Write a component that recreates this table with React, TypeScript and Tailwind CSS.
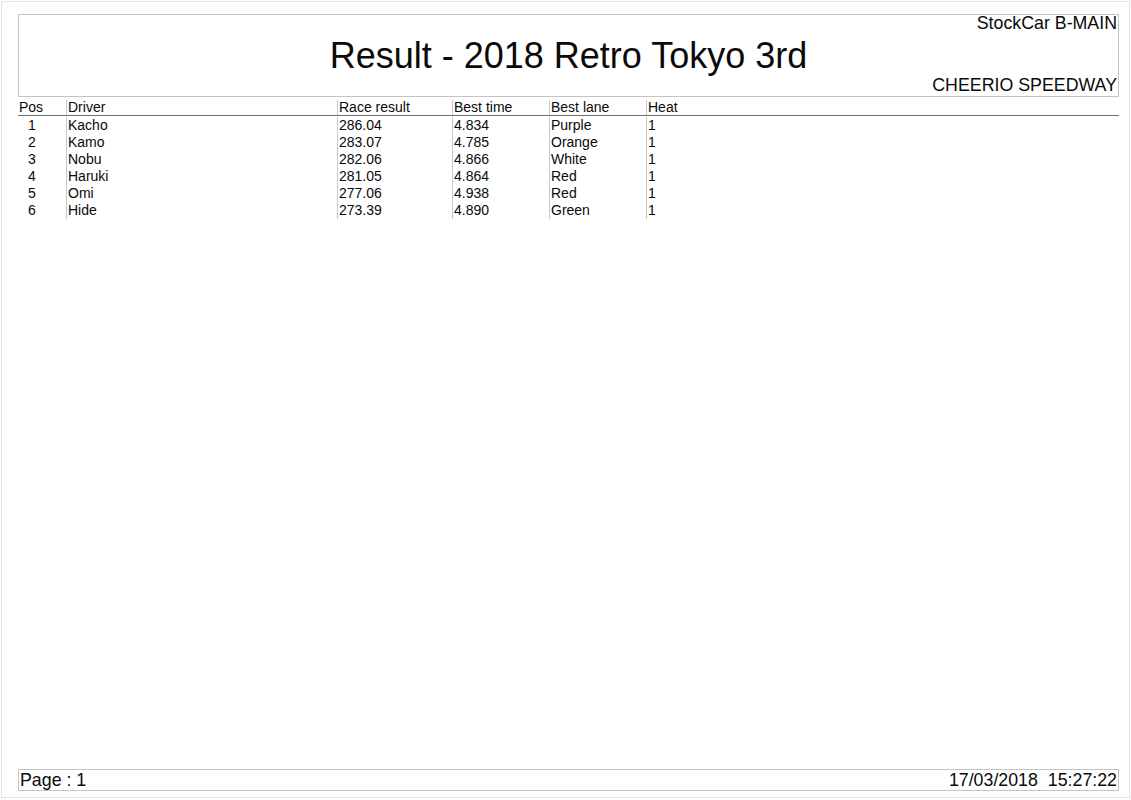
import React from "react";

const rows = [
  { pos: "1", driver: "Kacho", result: "286.04", best: "4.834", lane: "Purple", heat: "1" },
  { pos: "2", driver: "Kamo", result: "283.07", best: "4.785", lane: "Orange", heat: "1" },
  { pos: "3", driver: "Nobu", result: "282.06", best: "4.866", lane: "White", heat: "1" },
  { pos: "4", driver: "Haruki", result: "281.05", best: "4.864", lane: "Red", heat: "1" },
  { pos: "5", driver: "Omi", result: "277.06", best: "4.938", lane: "Red", heat: "1" },
  { pos: "6", driver: "Hide", result: "273.39", best: "4.890", lane: "Green", heat: "1" },
];

const cols = "grid grid-cols-[48px_271px_115px_97px_97px_1fr]";

export default function App() {
  return (
    <div
      className="w-[1131px] h-[800px] bg-white p-px text-[#0a0a0a]"
      style={{ fontFamily: '"Liberation Sans", Arial, sans-serif' }}
    >
      <div className="h-[797px] border border-[#e4e4e4] flex flex-col pl-[16px] pr-[10px] pt-[12px] pb-[6px]">
        {/* Header box */}
        <div className="h-[83px] border border-[#c4c4c4] flex flex-col">
          <div className="text-right text-[17.8px] leading-none pr-px">StockCar B-MAIN</div>
          <div className="text-center text-[36px] leading-none mt-[5px]">Result - 2018 Retro Tokyo 3rd</div>
          <div className="text-right text-[17.8px] leading-none mt-[3px] pr-px">CHEERIO SPEEDWAY</div>
        </div>

        {/* Table */}
        <div className="text-[14px]">
          <div className={`${cols} border-b border-[#707070] pt-[3px] leading-[15px]`}>
            <div className="pl-px">Pos</div>
            <div className="border-l border-[#c8c8c8] pl-px">Driver</div>
            <div className="border-l border-[#c8c8c8] pl-px">Race result</div>
            <div className="border-l border-[#c8c8c8] pl-px">Best time</div>
            <div className="border-l border-[#c8c8c8] pl-px">Best lane</div>
            <div className="border-l border-[#c8c8c8] pl-px">Heat</div>
          </div>
          <div className="pt-px">
            {rows.map((r) => (
              <div key={r.pos} className={`${cols} leading-[17px]`}>
                <div className="pl-[10px]">{r.pos}</div>
                <div className="border-l border-[#c8c8c8] pl-px">{r.driver}</div>
                <div className="border-l border-[#c8c8c8] pl-px">{r.result}</div>
                <div className="border-l border-[#c8c8c8] pl-px">{r.best}</div>
                <div className="border-l border-[#c8c8c8] pl-px">{r.lane}</div>
                <div className="border-l border-[#c8c8c8] pl-px">{r.heat}</div>
              </div>
            ))}
          </div>
        </div>

        <div className="flex-1" />

        {/* Footer box */}
        <div className="h-[22px] border border-[#c4c4c4] flex justify-between items-start text-[17.8px] leading-[19px] pt-px px-px">
          <span>Page : 1</span>
          <span className="whitespace-pre">17/03/2018  15:27:22</span>
        </div>
      </div>
    </div>
  );
}
